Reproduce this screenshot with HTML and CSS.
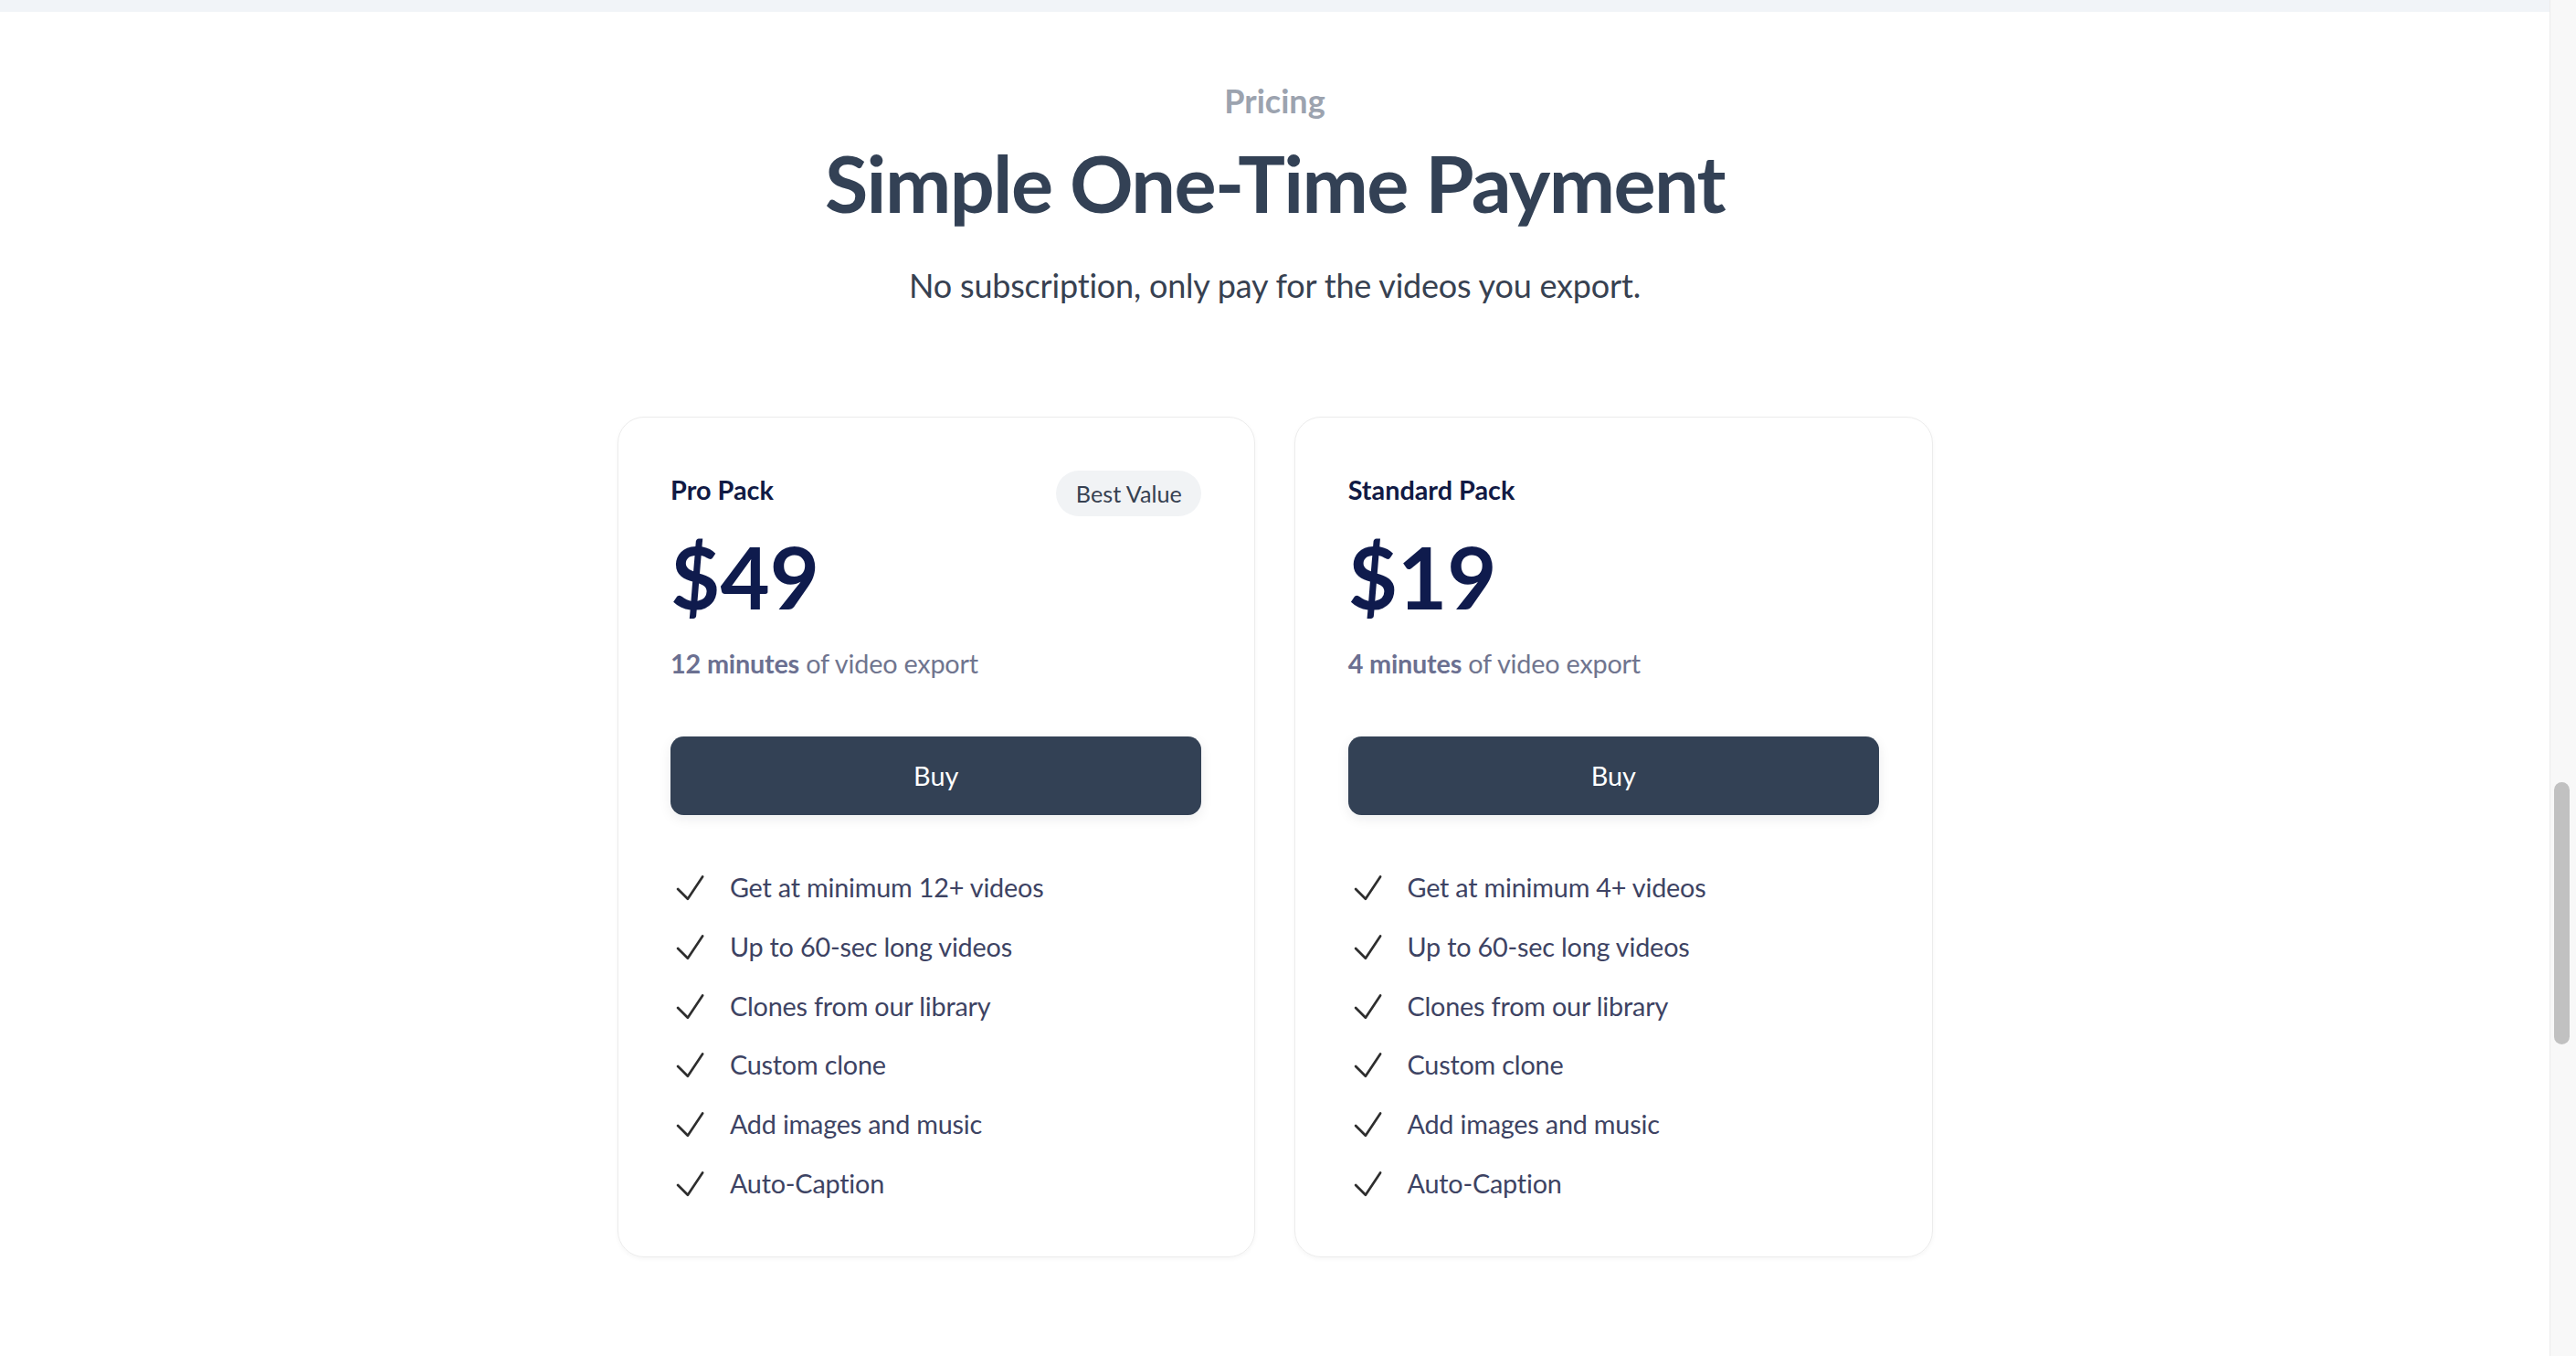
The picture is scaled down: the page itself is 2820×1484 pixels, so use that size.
FILE: index.html
```html
<!DOCTYPE html>
<html>
<head>
  <meta charset="utf-8">
  <meta name="viewport" content="width=device-width, initial-scale=1.0">
  <title>Pricing</title>
  <link rel="stylesheet" href="styles.css">
</head>
<body>
  <div class="page">
    <div class="content">
      <div class="topbar"></div>
      <section class="pricing">
        <header class="intro">
          <p class="eyebrow">Pricing</p>
          <h1>Simple One-Time Payment</h1>
          <p class="lead">No subscription, only pay for the videos you export.</p>
        </header>

        <div class="plans">
          <article class="plan">
            <div class="plan-head">
              <h2 class="plan-name">Pro Pack</h2>
              <span class="badge">Best Value</span>
            </div>
            <div class="price">$49</div>
            <p class="amount"><strong>12 minutes</strong> of video export</p>
            <button class="buy">Buy</button>
            <ul class="features">
              <li><svg viewBox="0 0 24 24" fill="none" stroke="currentColor" stroke-width="1.5"><path stroke-linecap="round" stroke-linejoin="round" d="m4.5 12.75 6 6 9-13.5"/></svg>Get at minimum 12+ videos</li>
              <li><svg viewBox="0 0 24 24" fill="none" stroke="currentColor" stroke-width="1.5"><path stroke-linecap="round" stroke-linejoin="round" d="m4.5 12.75 6 6 9-13.5"/></svg>Up to 60-sec long videos</li>
              <li><svg viewBox="0 0 24 24" fill="none" stroke="currentColor" stroke-width="1.5"><path stroke-linecap="round" stroke-linejoin="round" d="m4.5 12.75 6 6 9-13.5"/></svg>Clones from our library</li>
              <li><svg viewBox="0 0 24 24" fill="none" stroke="currentColor" stroke-width="1.5"><path stroke-linecap="round" stroke-linejoin="round" d="m4.5 12.75 6 6 9-13.5"/></svg>Custom clone</li>
              <li><svg viewBox="0 0 24 24" fill="none" stroke="currentColor" stroke-width="1.5"><path stroke-linecap="round" stroke-linejoin="round" d="m4.5 12.75 6 6 9-13.5"/></svg>Add images and music</li>
              <li><svg viewBox="0 0 24 24" fill="none" stroke="currentColor" stroke-width="1.5"><path stroke-linecap="round" stroke-linejoin="round" d="m4.5 12.75 6 6 9-13.5"/></svg>Auto-Caption</li>
            </ul>
          </article>

          <article class="plan">
            <div class="plan-head">
              <h2 class="plan-name">Standard Pack</h2>
            </div>
            <div class="price">$19</div>
            <p class="amount"><strong>4 minutes</strong> of video export</p>
            <button class="buy">Buy</button>
            <ul class="features">
              <li><svg viewBox="0 0 24 24" fill="none" stroke="currentColor" stroke-width="1.5"><path stroke-linecap="round" stroke-linejoin="round" d="m4.5 12.75 6 6 9-13.5"/></svg>Get at minimum 4+ videos</li>
              <li><svg viewBox="0 0 24 24" fill="none" stroke="currentColor" stroke-width="1.5"><path stroke-linecap="round" stroke-linejoin="round" d="m4.5 12.75 6 6 9-13.5"/></svg>Up to 60-sec long videos</li>
              <li><svg viewBox="0 0 24 24" fill="none" stroke="currentColor" stroke-width="1.5"><path stroke-linecap="round" stroke-linejoin="round" d="m4.5 12.75 6 6 9-13.5"/></svg>Clones from our library</li>
              <li><svg viewBox="0 0 24 24" fill="none" stroke="currentColor" stroke-width="1.5"><path stroke-linecap="round" stroke-linejoin="round" d="m4.5 12.75 6 6 9-13.5"/></svg>Custom clone</li>
              <li><svg viewBox="0 0 24 24" fill="none" stroke="currentColor" stroke-width="1.5"><path stroke-linecap="round" stroke-linejoin="round" d="m4.5 12.75 6 6 9-13.5"/></svg>Add images and music</li>
              <li><svg viewBox="0 0 24 24" fill="none" stroke="currentColor" stroke-width="1.5"><path stroke-linecap="round" stroke-linejoin="round" d="m4.5 12.75 6 6 9-13.5"/></svg>Auto-Caption</li>
            </ul>
          </article>
        </div>
      </section>
    </div>
    <div class="scrollbar"><div class="thumb"></div></div>
  </div>
</body>
</html>
```

FILE: styles.css
```css
html, body {
  margin: 0;
  padding: 0;
  height: 100%;
  overflow: hidden;
  background: #fff;
  font-family: "Lato", "Open Sans", sans-serif;
  color: #374151;
}
.page {
  display: flex;
  height: 100vh;
}
.content {
  flex: 1;
}
.topbar {
  height: 13px;
  background: #f1f4f8;
}

/* heading block */
.pricing {
  padding-top: 72px;
}
.intro {
  text-align: center;
}
.eyebrow {
  margin: 0;
  font-size: 36px;
  line-height: 50.4px;
  font-weight: 700;
  color: #9ca3af;
}
.intro h1 {
  margin: 21.6px 0 0;
  font-size: 86.4px;
  line-height: 86.4px;
  font-weight: 700;
  letter-spacing: -1.6px;
  color: #334155;
}
.lead {
  margin: 43.2px 0 0;
  font-size: 36px;
  line-height: 50.4px;
  letter-spacing: -0.2px;
  color: #374151;
}

/* cards */
.plans {
  display: grid;
  grid-template-columns: 1fr 1fr;
  gap: 43.2px;
  width: 1440px;
  margin: 119px auto 0;
}
.plan {
  border: 1.8px solid #ececec;
  border-radius: 29px;
  padding: 57.6px;
  box-shadow: 0 2px 5px rgba(0, 0, 0, 0.04);
}
.plan-head {
  display: flex;
  justify-content: space-between;
  align-items: flex-start;
  min-height: 51px;
}
.plan-name {
  margin: 0;
  font-size: 28.8px;
  line-height: 43.2px;
  font-weight: 700;
  color: #111a44;
}
.badge {
  padding: 7.2px 21.6px;
  border-radius: 999px;
  background: #f1f3f5;
  font-size: 25.2px;
  line-height: 36px;
  color: #374151;
}
.price {
  margin-top: 19px;
  font-size: 93.6px;
  line-height: 1;
  font-weight: 700;
  color: #0f1b4d;
}
.amount {
  margin: 27px 0 0;
  font-size: 28.8px;
  line-height: 43.2px;
  letter-spacing: -0.2px;
  color: #70758f;
}
.amount strong {
  font-weight: 700;
  color: #6b7091;
}
.buy {
  display: block;
  width: 100%;
  margin-top: 57.6px;
  padding: 21.6px;
  border: 0;
  border-radius: 14.4px;
  background: #334155;
  color: #fff;
  font-family: inherit;
  font-size: 28.8px;
  line-height: 43.2px;
  box-shadow: 0 4px 14px rgba(15, 23, 42, 0.08);
}
.features {
  list-style: none;
  margin: 57.6px 0 0;
  padding: 0;
  display: flex;
  flex-direction: column;
  gap: 21.6px;
}
.features li {
  display: flex;
  align-items: center;
  gap: 21.6px;
  font-size: 28.8px;
  line-height: 43.2px;
  letter-spacing: -0.2px;
  color: #3d4363;
}
.features svg {
  width: 43.2px;
  height: 43.2px;
  flex: none;
  color: #2e2e2e;
}

/* fake browser scrollbar */
.scrollbar {
  width: 28px;
  background: #f8f8f8;
  border-left: 1px solid #ececec;
}
.thumb {
  width: 17px;
  height: 287px;
  margin: 856px 0 0 4px;
  border-radius: 9px;
  background: #c1c1c1;
}
```
